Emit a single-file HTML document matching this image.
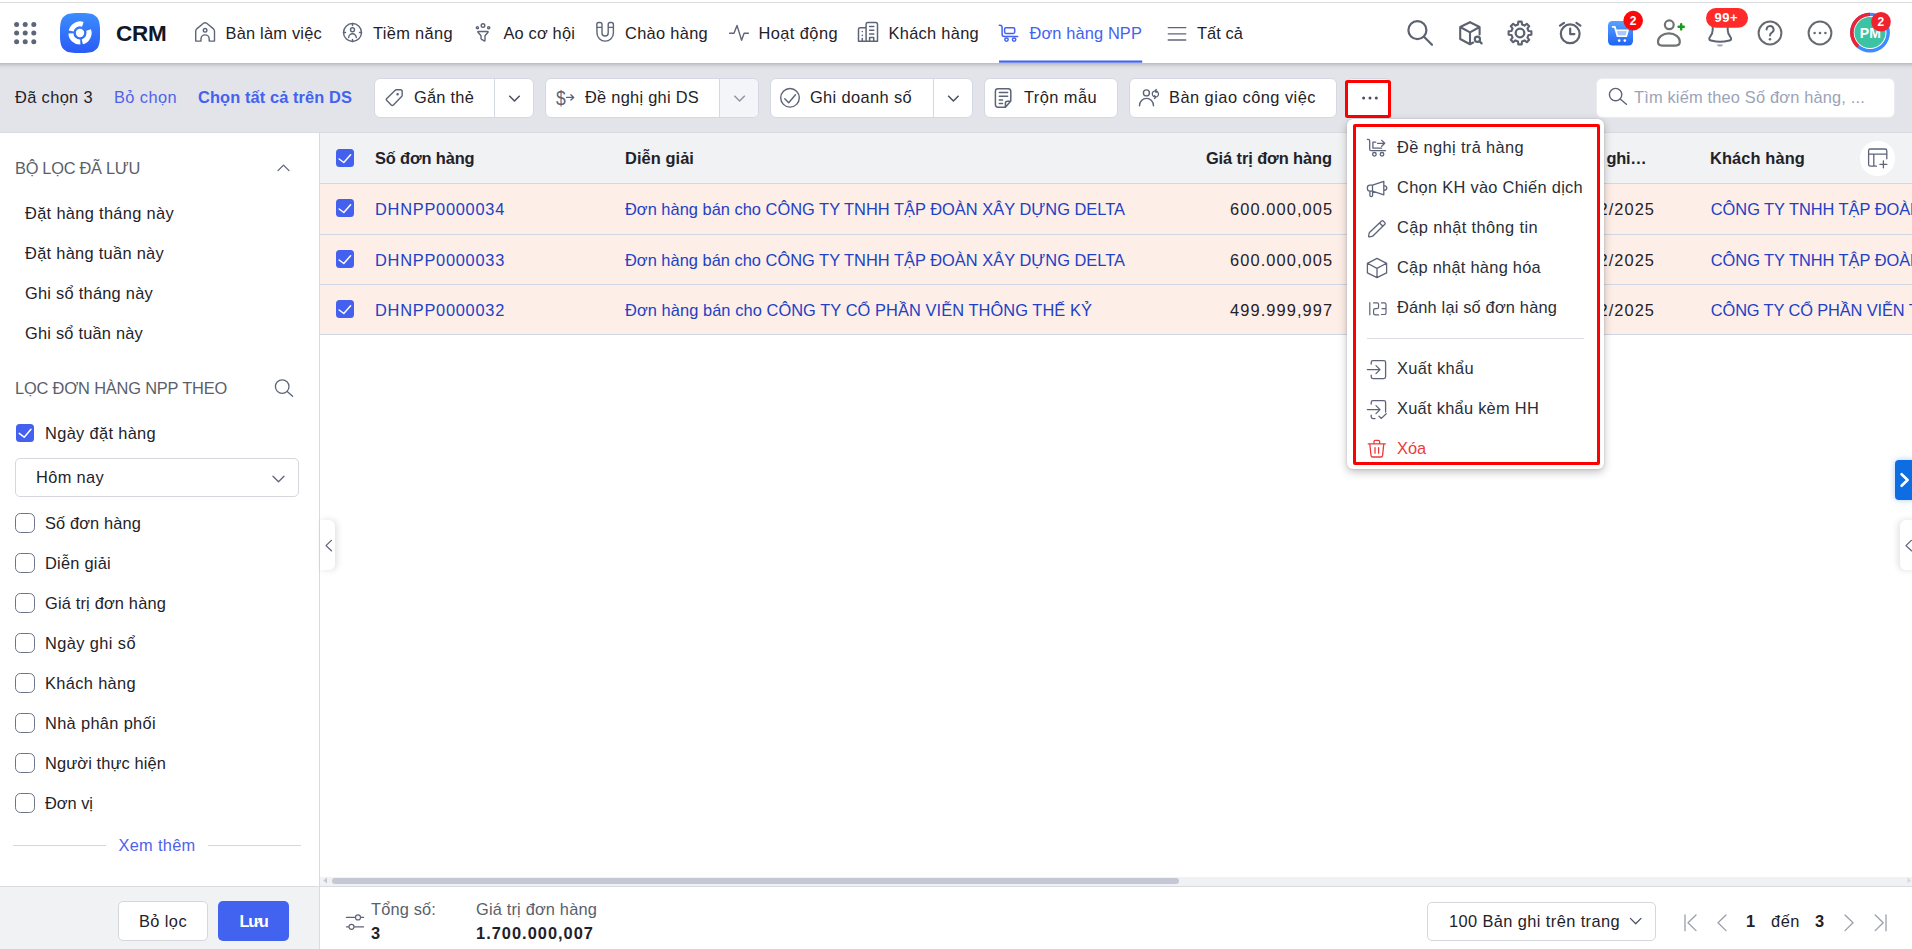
<!DOCTYPE html>
<html lang="vi"><head><meta charset="utf-8"><title>CRM - Đơn hàng NPP</title>
<style>
*{box-sizing:border-box;margin:0;padding:0}
html,body{width:1912px;height:949px;overflow:hidden;background:#fff;font-family:"Liberation Sans",sans-serif;color:#1f2229}
.a{position:absolute}
.t{z-index:3;position:absolute;white-space:nowrap;line-height:20px;font-family:"Liberation Sans",sans-serif;color:#1f2229}
svg{position:absolute;overflow:visible}
.btn{position:absolute;top:78px;height:40px;background:#fff;border:1px solid #d4d8e2;border-radius:6px}
.cb{position:absolute;width:20px;height:20px;border:1.3px solid #6d7389;border-radius:5.5px;background:#fff}
.cbc{position:absolute;width:18px;height:18px;border-radius:3.5px;background:#4460ee}

</style></head>
<body>
<!-- page backgrounds -->
<div class="a" style="left:0;top:62px;width:1912px;height:70px;background:#e3e4ea"></div>
<div class="a" style="left:-20px;top:0;width:1952px;height:62.500px;background:#fff;box-shadow:0 1px 5px rgba(40,42,52,.34)"></div>
<div class="a" style="left:0;top:2px;width:1912px;height:1px;background:#dcdde1"></div>
<!-- sidebar -->
<div class="a" style="left:0;top:132px;width:320px;height:817px;background:#fff;border-right:1px solid #d9dbe1;border-top:1px solid #d9dbe1"></div>
<div class="a" style="left:0;top:886px;width:320px;height:63px;background:#f1f2f4;border-top:1px solid #d9dbe1;border-right:1px solid #d9dbe1"></div>
<!-- table header -->
<div class="a" style="left:320px;top:132px;width:1592px;height:52px;background:#f1f2f4;border-top:1px solid #d9dbe1;border-bottom:1px solid #d5d7dd"></div>
<div class="a" style="left:320px;top:184px;width:1592px;height:150.500px;background:#fdeee8"></div>
<div class="a" style="left:320px;top:233.800px;width:1592px;height:1px;background:#d0d6e2"></div>
<div class="a" style="left:320px;top:284px;width:1592px;height:1px;background:#d0d6e2"></div>
<div class="a" style="left:320px;top:334px;width:1592px;height:1px;background:#d0d6e2"></div>
<!-- footer -->
<div class="a" style="left:320px;top:876.500px;width:1592px;height:9.500px;background:#f0f1f3"></div>
<div class="a" style="left:332px;top:877.600px;width:847px;height:6.600px;background:#c4c8d4;border-radius:4px"></div>
<div class="a" style="left:320px;top:886px;width:1592px;height:1px;background:#d9dbe1"></div>
<!-- toolbar buttons -->
<div class="btn" style="left:373.5px;width:160px"></div><div class="a" style="left:494px;top:79px;width:1px;height:38px;background:#d4d8e2"></div>
<div class="btn" style="left:544.5px;width:214px"></div><div class="a" style="left:719px;top:79px;width:38.500px;height:38px;background:#f4f5f8;border-left:1px solid #d4d8e2;border-radius:0 5px 5px 0"></div>
<div class="btn" style="left:769.5px;width:203px"></div><div class="a" style="left:933px;top:79px;width:1px;height:38px;background:#d4d8e2"></div>
<div class="btn" style="left:983.5px;width:134px"></div>
<div class="btn" style="left:1128.5px;width:208px"></div>
<div class="btn" style="left:1345.5px;width:45px"></div><div class="a" style="left:1345px;top:80px;width:46px;height:38px;border:3px solid #ff0000;border-radius:2.500px;background:#fff"></div>
<div class="btn" style="left:1595.5px;width:299px;border-color:#e9ebf0"></div>
<!-- dropdown menu -->
<div class="a" style="z-index:5;left:1347px;top:118.5px;width:257px;height:350px;background:#fff;border-radius:6px;box-shadow:0 3px 8px rgba(0,0,0,.25),0 0 2px rgba(0,0,0,.16)"></div>
<div class="a" style="z-index:6;left:1353px;top:124px;width:247px;height:340.500px;border:3px solid #ff0000;border-radius:2px"></div>
<div class="a" style="z-index:6;left:1367px;top:338px;width:217px;height:1px;background:#dcdee3"></div>
<!-- side handles -->
<div class="a" style="left:320px;top:520px;width:15px;height:50px;background:#fff;border-radius:0 6px 6px 0;box-shadow:2px 0 6px rgba(40,44,60,.14)"></div>
<div class="a" style="left:1895px;top:459.700px;width:20px;height:40.300px;background:#0d6de3;border-radius:4px 0 0 4px;box-shadow:0 0 6px rgba(30,110,230,.35)"></div>
<div class="a" style="left:1899.500px;top:520px;width:20px;height:50px;background:#fff;border-radius:6px 0 0 6px;box-shadow:-2px 0 6px rgba(40,44,60,.14)"></div>
<!-- sidebar widgets -->
<div class="a" style="left:15px;top:458px;width:284px;height:39px;border:1px solid #d5d7dd;border-radius:5px;background:#fff"></div>
<div class="cbc" style="left:16px;top:424px"></div>
<div class="cb" style="left:15px;top:513px"></div>
<div class="cb" style="left:15px;top:553px"></div>
<div class="cb" style="left:15px;top:593px"></div>
<div class="cb" style="left:15px;top:633px"></div>
<div class="cb" style="left:15px;top:673px"></div>
<div class="cb" style="left:15px;top:713px"></div>
<div class="cb" style="left:15px;top:753px"></div>
<div class="cb" style="left:15px;top:793px"></div>
<div class="a" style="left:13px;top:845px;width:93px;height:1px;background:#d5d7dd"></div>
<div class="a" style="left:208px;top:845px;width:93px;height:1px;background:#d5d7dd"></div>
<div class="a" style="left:118px;top:901px;width:90px;height:40px;background:#fff;border:1px solid #d5d7dd;border-radius:5px"></div>
<div class="a" style="left:218px;top:901px;width:71px;height:40px;background:#4262f0;border-radius:5px"></div>
<!-- table checkboxes -->
<div class="cbc" style="left:336px;top:149px"></div>
<div class="cbc" style="left:336px;top:199.200px"></div>
<div class="cbc" style="left:336px;top:249.800px"></div>
<div class="cbc" style="left:336px;top:300.200px"></div>
<div class="a" style="left:1860.200px;top:141.300px;width:34.400px;height:34.400px;border-radius:50%;background:#fff"></div>
<!-- page size -->
<div class="a" style="left:1427px;top:902px;width:229px;height:39px;background:#fff;border:1px solid #d5d7dd;border-radius:5px"></div>
<!-- ICONS -->
<svg class="a" style="left:0;top:0;z-index:2" width="1912" height="949" viewBox="0 0 1912 949" fill="none" stroke-linecap="round" stroke-linejoin="round">
<defs><linearGradient id="lg" x1="0" y1="0" x2="0" y2="1"><stop offset="0" stop-color="#3b8dff"/><stop offset="1" stop-color="#2a5af6"/></linearGradient>
<linearGradient id="cg" x1="0" y1="0" x2="0" y2="1"><stop offset="0" stop-color="#5aa2ff"/><stop offset="1" stop-color="#1f63f5"/></linearGradient></defs>
<!-- app grid -->
<g fill="#5d6579"><circle cx="16.6" cy="24.4" r="2.5"/><circle cx="25.2" cy="24.4" r="2.5"/><circle cx="33.8" cy="24.4" r="2.5"/><circle cx="16.6" cy="33.1" r="2.5"/><circle cx="25.2" cy="33.1" r="2.5"/><circle cx="33.8" cy="33.1" r="2.5"/><circle cx="16.6" cy="41.8" r="2.5"/><circle cx="25.2" cy="41.8" r="2.5"/><circle cx="33.8" cy="41.8" r="2.5"/></g>
<!-- logo -->
<path d="M100.0 33.0L100.0 37.8L99.8 40.1L99.6 42.0L99.3 43.6L98.9 45.1L98.4 46.3L97.8 47.4L97.1 48.4L96.3 49.3L95.4 50.1L94.4 50.8L93.3 51.4L92.1 51.9L90.6 52.3L89.0 52.6L87.1 52.8L84.8 53.0L80.0 53.0L75.2 53.0L72.9 52.8L71.0 52.6L69.4 52.3L67.9 51.9L66.7 51.4L65.6 50.8L64.6 50.1L63.7 49.3L62.9 48.4L62.2 47.4L61.6 46.3L61.1 45.1L60.7 43.6L60.4 42.0L60.2 40.1L60.0 37.8L60.0 33.0L60.0 28.2L60.2 25.9L60.4 24.0L60.7 22.4L61.1 20.9L61.6 19.7L62.2 18.6L62.9 17.6L63.7 16.7L64.6 15.9L65.6 15.2L66.7 14.6L67.9 14.1L69.4 13.7L71.0 13.4L72.9 13.2L75.2 13.0L80.0 13.0L84.8 13.0L87.1 13.2L89.0 13.4L90.6 13.7L92.1 14.1L93.3 14.6L94.4 15.2L95.4 15.9L96.3 16.7L97.1 17.6L97.8 18.6L98.4 19.7L98.9 20.9L99.3 22.4L99.6 24.0L99.8 25.9L100.0 28.2Z" fill="url(#lg)"/>
<circle cx="80" cy="33" r="4.200" fill="#fff"/>
<path fill="#fff" d="M68.70 30.39A11.6 11.6 0 0 1 83.58 21.970L82.040 26.720A6.6 6.6 0 0 0 73.570 31.520ZM90.970 29.220A11.6 11.6 0 0 1 82.900 44.230L81.650 39.390A6.6 6.600 0 0 0 86.240 30.850ZM80.400 44.590A11.6 11.6 0 0 1 68.410 33.400L73.400 33.230A6.6 6.6 0 0 0 80.230 39.600Z"/>
<!-- nav icons -->
<g stroke="#5d6579" stroke-width="1.400">
<path d="M195.700 41.100V31.200q0-1.400 1-2.300l6.800-5.600q1.600-1.200 3.200 0l6.800 5.600q1 .9 1 2.300V41.100h-5.300v-2.100a4.100 4.100 0 0 0-8.200 0v2.100z"/><circle cx="205.100" cy="30.300" r="1.800"/>
<circle cx="352.500" cy="32.500" r="9"/><path d="M352.500 23.500v2M352.500 41.500v-2M343.500 32.500h2M361.500 32.500h-2"/><circle cx="352.500" cy="29.800" r="2"/><path d="M348.700 37.600a3.800 3.800 0 0 1 7.600 0"/>
<circle cx="477.400" cy="27.700" r="1.100"/><circle cx="483" cy="25.600" r="1.800"/><circle cx="488.700" cy="27.700" r="1.100"/><path d="M478.600 31.500h9q.9 0 .4.800l-3 3.400v4.600q0 .9-.8.500l-2.600-1.500q-.6-.3-.6-1v-2.600l-3-3.400q-.5-.8.400-.8z"/>
<path d="M596.800 24.500q0-2 2-2h1.200q2 0 2 2v8.400a3.100 3.100 0 0 0 6.200 0v-8.400q0-2 2-2h1.200q2 0 2 2v8.400a8.200 8.200 0 0 1-16.400 0zM596.800 27.400h5.200M608.200 27.400h5.200"/>
<path d="M729.600 33.200h4.400l3-7.800 4.600 14.800 2.500-7h4.300"/>
<path d="M866.100 41.300V24.200q0-1.700 1.700-1.700h8q1.700 0 1.700 1.700V41.300zM866.100 27.700h-5.900q-1.700 0-1.700 1.700V41.300h7.600M869.600 26.400h4.200M869.600 30.200h4.200M869.600 33.900h4.200M869.600 41.300v-3.800h4.100v3.800M862.300 31.400v.2M862.300 35.200v.2M862.300 38.500v2.800" stroke-width="1.500"/>
<path d="M1168.200 27.600h17.600M1168.200 33.800h17.600M1168.200 40h17.600" stroke-width="1.300"/>
</g>
<g stroke="#4562f0" stroke-width="1.500"><path d="M999.300 25.200h.6q2.200 0 2.200 2.200v6.800q0 2.200 2.200 2.200h13.400"/><rect x="1004.600" y="27.700" width="10.100" height="5.700" rx="1.300"/><circle cx="1006.500" cy="39.600" r="1.700"/><circle cx="1014.100" cy="39.600" r="1.700"/></g>
<rect x="999" y="60.500" width="143.200" height="2.200" fill="#4262f0" stroke="none"/>
<!-- right header icons -->
<g stroke="#5c6270" stroke-width="2.200">
<circle cx="1417.400" cy="30.200" r="9"/><path d="M1424 36.800l8 8"/>
<path d="M1470 22.200l9.600 4.800v7.400M1470 22.200l-9.800 4.800v12l9.800 5.200V32.400M1460.200 27l9.800 5.400 9.600-5.400M1470 44.200l3.200-1.700" stroke-width="2.100"/><circle cx="1477.400" cy="39.200" r="2.600" stroke-width="2.200"/><path d="M1479.600 41.400l2 2" stroke-width="2.200"/>
<circle cx="1520" cy="33" r="4.300" stroke-width="2.300"/>
<path d="M1517.97 24.54L1518.30 21.63L1521.70 21.63L1522.03 24.54L1524.55 25.58L1526.84 23.76L1529.24 26.16L1527.42 28.45L1528.46 30.97L1531.37 31.30L1531.37 34.70L1528.46 35.03L1527.42 37.55L1529.24 39.84L1526.84 42.24L1524.55 40.42L1522.03 41.46L1521.70 44.37L1518.30 44.37L1517.97 41.46L1515.45 40.42L1513.16 42.24L1510.76 39.84L1512.58 37.55L1511.54 35.03L1508.63 34.70L1508.63 31.30L1511.54 30.97L1512.58 28.45L1510.76 26.16L1513.16 23.76L1515.45 25.58Z" stroke-width="2.100"/>
<circle cx="1570.200" cy="33.800" r="9.400"/><path d="M1570.200 28.500v5.600h4.200M1560 25.600l4-2.800M1580.400 25.600l-4-2.800"/>
</g>
<g stroke="#676b70" stroke-width="2"><circle cx="1770" cy="33" r="11.400"/><circle cx="1820" cy="33" r="11.400"/></g>
<g fill="#676b70"><circle cx="1814.600" cy="33" r="1.300"/><circle cx="1820" cy="33" r="1.300"/><circle cx="1825.400" cy="33" r="1.300"/><circle cx="1770" cy="39.300" r="1.300"/></g>
<path d="M1766.600 29.600a3.500 3.500 0 1 1 5.200 3c-1.200.7-1.800 1.300-1.800 2.900" stroke="#5c6270" stroke-width="1.900"/>
<!-- cart app -->
<rect x="1608" y="21" width="25" height="24.600" rx="4.500" fill="url(#cg)"/>
<path d="M1612.600 26.800h2.200l2.700 9.400h8.800l1.600-5.800h-11.800" stroke="#fff" stroke-width="1.800"/><path d="M1616.800 31.200h10.800l-1.300 4.600h-8.200z" fill="#fff" fill-opacity=".55" stroke="none"/><circle cx="1619.200" cy="40.600" r="1.300" fill="#fff"/><circle cx="1624.800" cy="40.600" r="1.300" fill="#fff"/>
<circle cx="1633.200" cy="20.600" r="9.800" fill="#fb0a0a"/>
<!-- user plus -->
<g stroke="#717273" stroke-width="2.200"><circle cx="1669.300" cy="24.800" r="4.400"/><path d="M1658 41.800c0-4.600 4.600-8.400 10.900-8.400s10.900 3.800 10.900 8.400c0 2.600-1.800 3.800-4.200 3.800h-13.400c-2.400 0-4.200-1.200-4.200-3.800z"/></g>
<path d="M1681.200 24.200v5.200M1678.600 26.800h5.200" stroke="#1a9a1a" stroke-width="2.400" stroke-linecap="round"/>
<!-- bell -->
<path d="M1716.800 44.400h6.300q-.7 2.200-3.150 2.200t-3.150-2.200z" fill="#9aa0a8" stroke="none"/>
<path d="M1712.700 26v4c0 3.400-.8 4.800-2.800 7.200c-1.200 1.500-.6 3.100 1 3.400c2.800.6 5.800 1.200 9.300 1.200s6.500-.6 9.300-1.200c1.600-.3 2.200-1.900 1-3.400c-2-2.400-2.800-3.800-2.800-7.200v-4" stroke="#5f6672" stroke-width="2"/>
<rect x="1706" y="8" width="42" height="19.800" rx="9.900" fill="#ff2a2a"/>
<!-- avatar -->
<circle cx="1870" cy="32.600" r="18.200" stroke="#3d8bff" stroke-width="3.400"/>
<path d="M1858.300 46.540A18.200 18.200 0 0 1 1870 14.400" stroke="#ee2233" stroke-width="3.400" stroke-linecap="butt"/>
<circle cx="1870" cy="32.600" r="15.500" fill="#3bc3a4"/>
<!-- toolbar icons -->
<g stroke="#5d6478" stroke-width="1.400">
<path d="M396.200 89.800h4.200q1.800 0 1.800 1.800v3.600q0 .8-.6 1.400l-8.200 8.400q-1.100 1.100-2.200 0l-4.400-4.400q-1.100-1.100 0-2.200l8.200-8q.6-.6 1.400-.6z"/><circle cx="397.600" cy="94.200" r=".6" fill="#5d6478"/>
<path d="M566.600 97.400h7M570.900 94.700l2.800 2.700-2.800 2.700" stroke-width="1.400"/>
<circle cx="790" cy="97.800" r="9.300"/><path d="M784.800 98.800l3.900 4 6.800-8"/>
<path d="M998 88.700h10.200q2.600 0 2.600 2.600v9.600l-5.400 6.300h-7.400q-2.600 0-2.600-2.600v-13.300q0-2.600 2.600-2.600zM1010.600 101.200h-3.200q-2 0-2 2v3.800M999.300 92.400h8.300M999.300 96.200h8.300M999.300 99.900h3.200M999.300 103.600h3.200" stroke-width="1.500"/>
<circle cx="1146.400" cy="92.900" r="3"/><path d="M1139.500 105.800a7 7.400 0 0 1 14 0"/>
<path d="M1156.950 96.680A3.100 3.100 0 0 0 1154.860 90.950M1156.300 89.500l-1.600 1.450 1.600 1.500M1153.850 91.320A3.100 3.100 0 0 0 1155.940 97.050M1154.500 95.600l1.600 1.450-1.600 1.500" stroke-width="1.200"/>
</g>
<g stroke="#4a5062" stroke-width="1.500" stroke-linecap="butt"><path d="M509.300 95.700l5.200 5.300 5.200-5.300M948.200 95.700l5.200 5.300 5.200-5.300"/><path d="M734.400 95.700l5.200 5.300 5.200-5.300" stroke="#9096a6"/></g>
<g fill="#4a5062"><circle cx="1363.600" cy="98" r="1.500"/><circle cx="1370" cy="98" r="1.500"/><circle cx="1376.300" cy="98" r="1.500"/></g>
<g stroke="#5d6478" stroke-width="1.400"><circle cx="1615.600" cy="94.600" r="6.200"/><path d="M1620.200 99l6.200 5.200"/></g>
<!-- sidebar icons -->
<g stroke="#5d6478" stroke-width="1.300"><path d="M278 170.600l5.500-5.500 5.500 5.500"/><circle cx="282.200" cy="386.600" r="6.800"/><path d="M287.200 391.400l5.400 4.800"/><path d="M273 476.200l5.500 5.500 5.500-5.500"/>
<path d="M331.400 540.400l-5.400 5.200 5.400 5.200M1911.400 540.400l-5.400 5.200 5.400 5.200"/></g>
<path d="M19.200 433.400l5 3.800 6.800-8" stroke="#fff" stroke-width="1.500"/>
<path d="M339.200 159l4.600 3.500 6.800-7.700M339.200 209l4.600 3.500 6.800-7.700M339.200 260l4.600 3.500 6.800-7.700M339.200 310l4.600 3.500 6.800-7.700" stroke="#fff" stroke-width="1.500"/>
<path d="M1901.600 474.200l6 5.800-6 5.800" stroke="#fff" stroke-width="2.600"/>
<!-- table settings icon -->
<g stroke="#5d6478" stroke-width="1.300"><path d="M1876.400 166.200h-6q-1.800 0-1.800-1.800v-13.600q0-1.800 1.800-1.800h14.600q1.800 0 1.800 1.800v8M1868.600 154.200h18.200M1873.800 154.200v12M1883.400 160.800v7M1879.900 164.300h7"/></g>
<!-- footer icons -->
<g stroke="#5d6478" stroke-width="1.200"><path d="M346.400 917.400h8.800M361 917.400h2.600M346.400 926.800h2.200M354.400 926.800h9.200"/><circle cx="358" cy="917.400" r="2.500"/><circle cx="351.500" cy="926.800" r="2.500"/>
<path d="M1630.400 918.400l5.300 5.300 5.300-5.300" stroke="#4a5062" stroke-width="1.300"/></g>
<g stroke="#9a9fab" stroke-width="1.300"><path d="M1685 914.800v16M1696 915l-8 7.800 8 7.800M1726 915l-8 7.800 8 7.800M1845 915l8 7.800-8 7.800M1875.200 915l8 7.800-8 7.800M1886 914.800v16"/></g>
<path d="M327 877.600l-3.600 3 3.600 3z" fill="#c3c7d3"/><path d="M1907.500 877.600l3.600 3-3.600 3z" fill="#d8dae0"/>
</svg>
<!-- menu icon layer -->
<svg class="a" style="left:0;top:0;z-index:7" width="1912" height="949" viewBox="0 0 1912 949" fill="none" stroke-linecap="round" stroke-linejoin="round">
<g stroke="#5d6478" stroke-width="1.300">
<path d="M1367.400 139.400h.8q1.500 0 1.500 1.500v8.300q0 1.500 1.500 1.500h14.300M1375.800 142.200h-2.900v5.900h8.800M1377.500 143.300h7.200M1381.700 140.400l3 2.900-3 2.900"/><circle cx="1374.400" cy="154.300" r="1.800"/><circle cx="1382" cy="154.300" r="1.800"/>
<path d="M1372.500 185.200l11.300-3.900v13.500l-11.300-3.700h-2.500q-2.600 0-2.600-2.600v-.7q0-2.600 2.600-2.600zM1372.500 185.200v5.900M1369.900 191.100v4.200q0 1.300 1.300 1.300h.1q1.300 0 1.300-1.300v-4.200M1383.800 185.600q3 .3 3 2.500t-3 2.500"/>
<path d="M1381.600 221q.8-.8 1.600 0l1.600 1.600q.8.800 0 1.600l-11.600 11.600q-.5.500-1.200.6l-2.600.5q-.9.100-.8-.8l.5-2.600q.1-.7.600-1.200zM1379.600 223l3.200 3.200"/>
<path d="M1377 258.400l9.600 4.900v9.600l-9.600 4.800-9.600-4.800v-9.600zM1367.400 263.300l9.600 5.100 9.600-5.100M1377 268.400v9.300"/>
<path d="M1369.800 302.600v12.200M1373.600 302.900h3.400q1.600 0 1.600 1.600v2.600q0 1.600-1.600 1.600h-1.800q-1.600 0-1.600 1.600v3q0 1.600 1.600 1.600h3.400M1381.400 302.900h3q1.600 0 1.600 1.600v8.400q0 1.600-1.600 1.600h-3M1382 308.700h4" stroke-width="1.200"/>
<path d="M1371.200 364v-1.600q0-1.800 1.800-1.800h10.800q1.800 0 1.800 1.800v14.400q0 1.800-1.800 1.800h-10.800q-1.800 0-1.800-1.800v-1.600M1367.400 369.600h12.400M1376 365.600l4 4-4 4"/>
<path d="M1371.200 404v-1.600q0-1.800 1.800-1.800h10.800q1.800 0 1.800 1.800v9.600M1371.200 415.200v1.600q0 1.800 1.800 1.800h2M1367.400 409.600h12.400M1376 405.600l4 4-4 4M1379 416.200l2.400 2.200 4.800-4.600"/>
</g>
<circle cx="1881" cy="21.800" r="9.800" fill="#f0222e"/>
<g stroke="#ec3a3a" stroke-width="1.300"><path d="M1368.200 443.800h17.200M1374 443.800v-2.200q0-1.200 1.200-1.200h3.200q1.200 0 1.200 1.200v2.200M1369.800 443.800l1.200 11.600q.2 1.600 1.800 1.600h8q1.600 0 1.800-1.600l1.200-11.600M1375 447.600v5.600M1378.600 447.600v5.600"/></g>
</svg>

<div id="texts">
<span class="t" style="top:24.20px;font-size:22.5px;font-weight:700;color:#111827;letter-spacing:-0.250px;left:116px;">CRM</span>
<span class="t" style="top:23.32px;font-size:16.4px;letter-spacing:0.221px;left:225.5px;">Bàn làm việc</span>
<span class="t" style="top:23.32px;font-size:16.4px;letter-spacing:0.351px;left:373px;">Tiềm năng</span>
<span class="t" style="top:23.32px;font-size:16.4px;letter-spacing:0.168px;left:503.5px;">Ao cơ hội</span>
<span class="t" style="top:23.32px;font-size:16.4px;letter-spacing:0.311px;left:625px;">Chào hàng</span>
<span class="t" style="top:23.32px;font-size:16.4px;letter-spacing:0.429px;left:758.5px;">Hoạt động</span>
<span class="t" style="top:23.32px;font-size:16.4px;letter-spacing:0.300px;left:888.5px;">Khách hàng</span>
<span class="t" style="top:23.32px;font-size:16.4px;color:#4262f0;letter-spacing:0.126px;left:1029.5px;">Đơn hàng NPP</span>
<span class="t" style="top:22.52px;font-size:16.4px;letter-spacing:0.076px;left:1197px;">Tất cả</span>
<span class="t" style="top:87.32px;font-size:16.4px;letter-spacing:0.365px;left:15px;">Đã chọn 3</span>
<span class="t" style="top:87.32px;font-size:16.4px;color:#4f63ea;letter-spacing:0.406px;left:114px;">Bỏ chọn</span>
<span class="t" style="top:87.32px;font-size:16.4px;font-weight:700;color:#4262f0;letter-spacing:0.100px;left:198px;">Chọn tất cả trên DS</span>
<span class="t" style="top:87.32px;font-size:16.4px;letter-spacing:0.239px;left:414px;">Gắn thẻ</span>
<span class="t" style="top:87.32px;font-size:16.4px;letter-spacing:0.268px;left:585px;">Đề nghị ghi DS</span>
<span class="t" style="top:87.32px;font-size:16.4px;letter-spacing:0.374px;left:810px;">Ghi doanh số</span>
<span class="t" style="top:87.32px;font-size:16.4px;letter-spacing:0.432px;left:1024px;">Trộn mẫu</span>
<span class="t" style="top:87.32px;font-size:16.4px;letter-spacing:0.471px;left:1169px;">Bàn giao công việc</span>
<span class="t" style="top:87.32px;font-size:16.4px;color:#9ba3b9;letter-spacing:0.174px;left:1634px;">Tìm kiếm theo Số đơn hàng, ...</span>
<span class="t" style="top:158.32px;font-size:16.4px;color:#5a606b;letter-spacing:-0.290px;left:15px;">BỘ LỌC ĐÃ LƯU</span>
<span class="t" style="top:203.32px;font-size:16.4px;letter-spacing:0.329px;left:25px;">Đặt hàng tháng này</span>
<span class="t" style="top:243.32px;font-size:16.4px;letter-spacing:0.296px;left:25px;">Đặt hàng tuần này</span>
<span class="t" style="top:283.32px;font-size:16.4px;letter-spacing:0.254px;left:25px;">Ghi sổ tháng này</span>
<span class="t" style="top:323.32px;font-size:16.4px;letter-spacing:0.212px;left:25px;">Ghi sổ tuần này</span>
<span class="t" style="top:378.32px;font-size:16.4px;color:#5a606b;letter-spacing:-0.173px;left:15px;">LỌC ĐƠN HÀNG NPP THEO</span>
<span class="t" style="top:423.32px;font-size:16.4px;letter-spacing:0.337px;left:45px;">Ngày đặt hàng</span>
<span class="t" style="top:467.32px;font-size:16.4px;letter-spacing:0.344px;left:36px;">Hôm nay</span>
<span class="t" style="top:513.32px;font-size:16.4px;letter-spacing:0.126px;left:45px;">Số đơn hàng</span>
<span class="t" style="top:553.32px;font-size:16.4px;letter-spacing:0.247px;left:45px;">Diễn giải</span>
<span class="t" style="top:593.32px;font-size:16.4px;letter-spacing:0.171px;left:45px;">Giá trị đơn hàng</span>
<span class="t" style="top:633.32px;font-size:16.4px;letter-spacing:0.403px;left:45px;">Ngày ghi sổ</span>
<span class="t" style="top:673.32px;font-size:16.4px;letter-spacing:0.350px;left:45px;">Khách hàng</span>
<span class="t" style="top:713.32px;font-size:16.4px;letter-spacing:0.335px;left:45px;">Nhà phân phối</span>
<span class="t" style="top:753.32px;font-size:16.4px;letter-spacing:0.117px;left:45px;">Người thực hiện</span>
<span class="t" style="top:793.32px;font-size:16.4px;letter-spacing:-0.016px;left:45px;">Đơn vị</span>
<span class="t" style="top:835.32px;font-size:16.4px;color:#4f63ea;letter-spacing:0.287px;left:118.5px;">Xem thêm</span>
<span class="t" style="top:911.32px;font-size:16.4px;letter-spacing:0.406px;left:139px;">Bỏ lọc</span>
<span class="t" style="top:911.32px;font-size:16.4px;font-weight:700;color:#fff;letter-spacing:-1.302px;left:239.5px;">Lưu</span>
<span class="t" style="top:148.32px;font-size:16.4px;font-weight:700;letter-spacing:-0.126px;left:375px;">Số đơn hàng</span>
<span class="t" style="top:148.32px;font-size:16.4px;font-weight:700;letter-spacing:0.076px;left:625px;">Diễn giải</span>
<span class="t" style="top:148.32px;font-size:16.4px;font-weight:700;letter-spacing:-0.082px;right:580.08px;">Giá trị đơn hàng</span>
<span class="t" style="top:148.32px;font-size:16.4px;font-weight:700;letter-spacing:-0.242px;left:1606.4px;">ghi…</span>
<span class="t" style="top:148.32px;font-size:16.4px;font-weight:700;letter-spacing:0.119px;left:1710px;">Khách hàng</span>
<span class="t" style="top:199.22px;font-size:16.4px;color:#2141c4;letter-spacing:0.734px;left:375px;">DHNPP0000034</span>
<span class="t" style="top:199.22px;font-size:16.4px;color:#2141c4;letter-spacing:0.024px;left:625px;">Đơn hàng bán cho CÔNG TY TNHH TẬP ĐOÀN XÂY DỰNG DELTA</span>
<span class="t" style="top:199.22px;font-size:16.4px;letter-spacing:1.077px;right:578.92px;">600.000,005</span>
<span class="t" style="top:199.22px;font-size:16.4px;letter-spacing:1.060px;left:1598.5px;">2/2025</span>
<span class="t" style="top:199.22px;font-size:16.4px;color:#2141c4;letter-spacing:-0.024px;left:1710.8px;">CÔNG TY TNHH TẬP ĐOÀN</span>
<span class="t" style="top:249.72px;font-size:16.4px;color:#2141c4;letter-spacing:0.734px;left:375px;">DHNPP0000033</span>
<span class="t" style="top:249.72px;font-size:16.4px;color:#2141c4;letter-spacing:0.024px;left:625px;">Đơn hàng bán cho CÔNG TY TNHH TẬP ĐOÀN XÂY DỰNG DELTA</span>
<span class="t" style="top:249.72px;font-size:16.4px;letter-spacing:1.077px;right:578.92px;">600.000,005</span>
<span class="t" style="top:249.72px;font-size:16.4px;letter-spacing:1.060px;left:1598.5px;">2/2025</span>
<span class="t" style="top:249.72px;font-size:16.4px;color:#2141c4;letter-spacing:-0.024px;left:1710.8px;">CÔNG TY TNHH TẬP ĐOÀN</span>
<span class="t" style="top:299.82px;font-size:16.4px;color:#2141c4;letter-spacing:0.734px;left:375px;">DHNPP0000032</span>
<span class="t" style="top:299.82px;font-size:16.4px;color:#2141c4;letter-spacing:0.077px;left:625px;">Đơn hàng bán cho CÔNG TY CỔ PHẦN VIỄN THÔNG THẾ KỶ</span>
<span class="t" style="top:299.82px;font-size:16.4px;letter-spacing:1.077px;right:578.92px;">499.999,997</span>
<span class="t" style="top:299.82px;font-size:16.4px;letter-spacing:1.060px;left:1598.5px;">2/2025</span>
<span class="t" style="top:299.82px;font-size:16.4px;color:#2141c4;letter-spacing:-0.121px;left:1710.8px;">CÔNG TY CỔ PHẦN VIỄN THÔNG</span>
<span class="t" style="top:137.32px;font-size:16.4px;color:#2a2e36;letter-spacing:0.362px;left:1397px;z-index:8;">Đề nghị trả hàng</span>
<span class="t" style="top:177.32px;font-size:16.4px;color:#2a2e36;letter-spacing:0.295px;left:1397px;z-index:8;">Chọn KH vào Chiến dịch</span>
<span class="t" style="top:217.32px;font-size:16.4px;color:#2a2e36;letter-spacing:0.391px;left:1397px;z-index:8;">Cập nhật thông tin</span>
<span class="t" style="top:257.32px;font-size:16.4px;color:#2a2e36;letter-spacing:0.267px;left:1397px;z-index:8;">Cập nhật hàng hóa</span>
<span class="t" style="top:297.32px;font-size:16.4px;color:#2a2e36;letter-spacing:0.172px;left:1397px;z-index:8;">Đánh lại số đơn hàng</span>
<span class="t" style="top:358.32px;font-size:16.4px;color:#2a2e36;letter-spacing:0.352px;left:1397px;z-index:8;">Xuất khẩu</span>
<span class="t" style="top:398.32px;font-size:16.4px;color:#2a2e36;letter-spacing:0.277px;left:1397px;z-index:8;">Xuất khẩu kèm HH</span>
<span class="t" style="top:438.32px;font-size:16.4px;color:#ec3a3a;letter-spacing:-0.057px;left:1397px;z-index:8;">Xóa</span>
<span class="t" style="top:899.32px;font-size:16.4px;color:#5a606b;letter-spacing:0.152px;left:371px;">Tổng số:</span>
<span class="t" style="top:923.32px;font-size:16.4px;font-weight:700;letter-spacing:0.875px;left:371px;">3</span>
<span class="t" style="top:899.32px;font-size:16.4px;color:#5a606b;letter-spacing:0.171px;left:476px;">Giá trị đơn hàng</span>
<span class="t" style="top:923.32px;font-size:16.4px;font-weight:700;letter-spacing:1.013px;left:476px;">1.700.000,007</span>
<span class="t" style="top:911.32px;font-size:16.4px;letter-spacing:0.400px;left:1449px;">100 Bản ghi trên trang</span>
<span class="t" style="top:911.32px;font-size:16.4px;font-weight:700;letter-spacing:0.875px;left:1746px;">1</span>
<span class="t" style="top:911.32px;font-size:16.4px;letter-spacing:0.547px;left:1771px;">đến</span>
<span class="t" style="top:911.32px;font-size:16.4px;font-weight:700;letter-spacing:0.875px;left:1815px;">3</span>
<span class="t" style="top:10.84px;font-size:12px;font-weight:700;color:#fff;left:1629.8px;">2</span>
<span class="t" style="top:8.30px;font-size:13px;font-weight:700;color:#fff;letter-spacing:0.546px;left:1714.5px;">99+</span>
<span class="t" style="top:12.04px;font-size:12px;font-weight:700;color:#fff;left:1877.6px;z-index:8;">2</span>
<span class="t" style="top:23.45px;font-size:14px;font-weight:700;color:#fff;left:1859.8px;">PM</span>
<span class="t" style="top:87.53px;font-size:20.4px;color:#5d6478;left:555.6px;transform:scaleX(.86);transform-origin:left center;">$</span>
</div>
</body></html>
